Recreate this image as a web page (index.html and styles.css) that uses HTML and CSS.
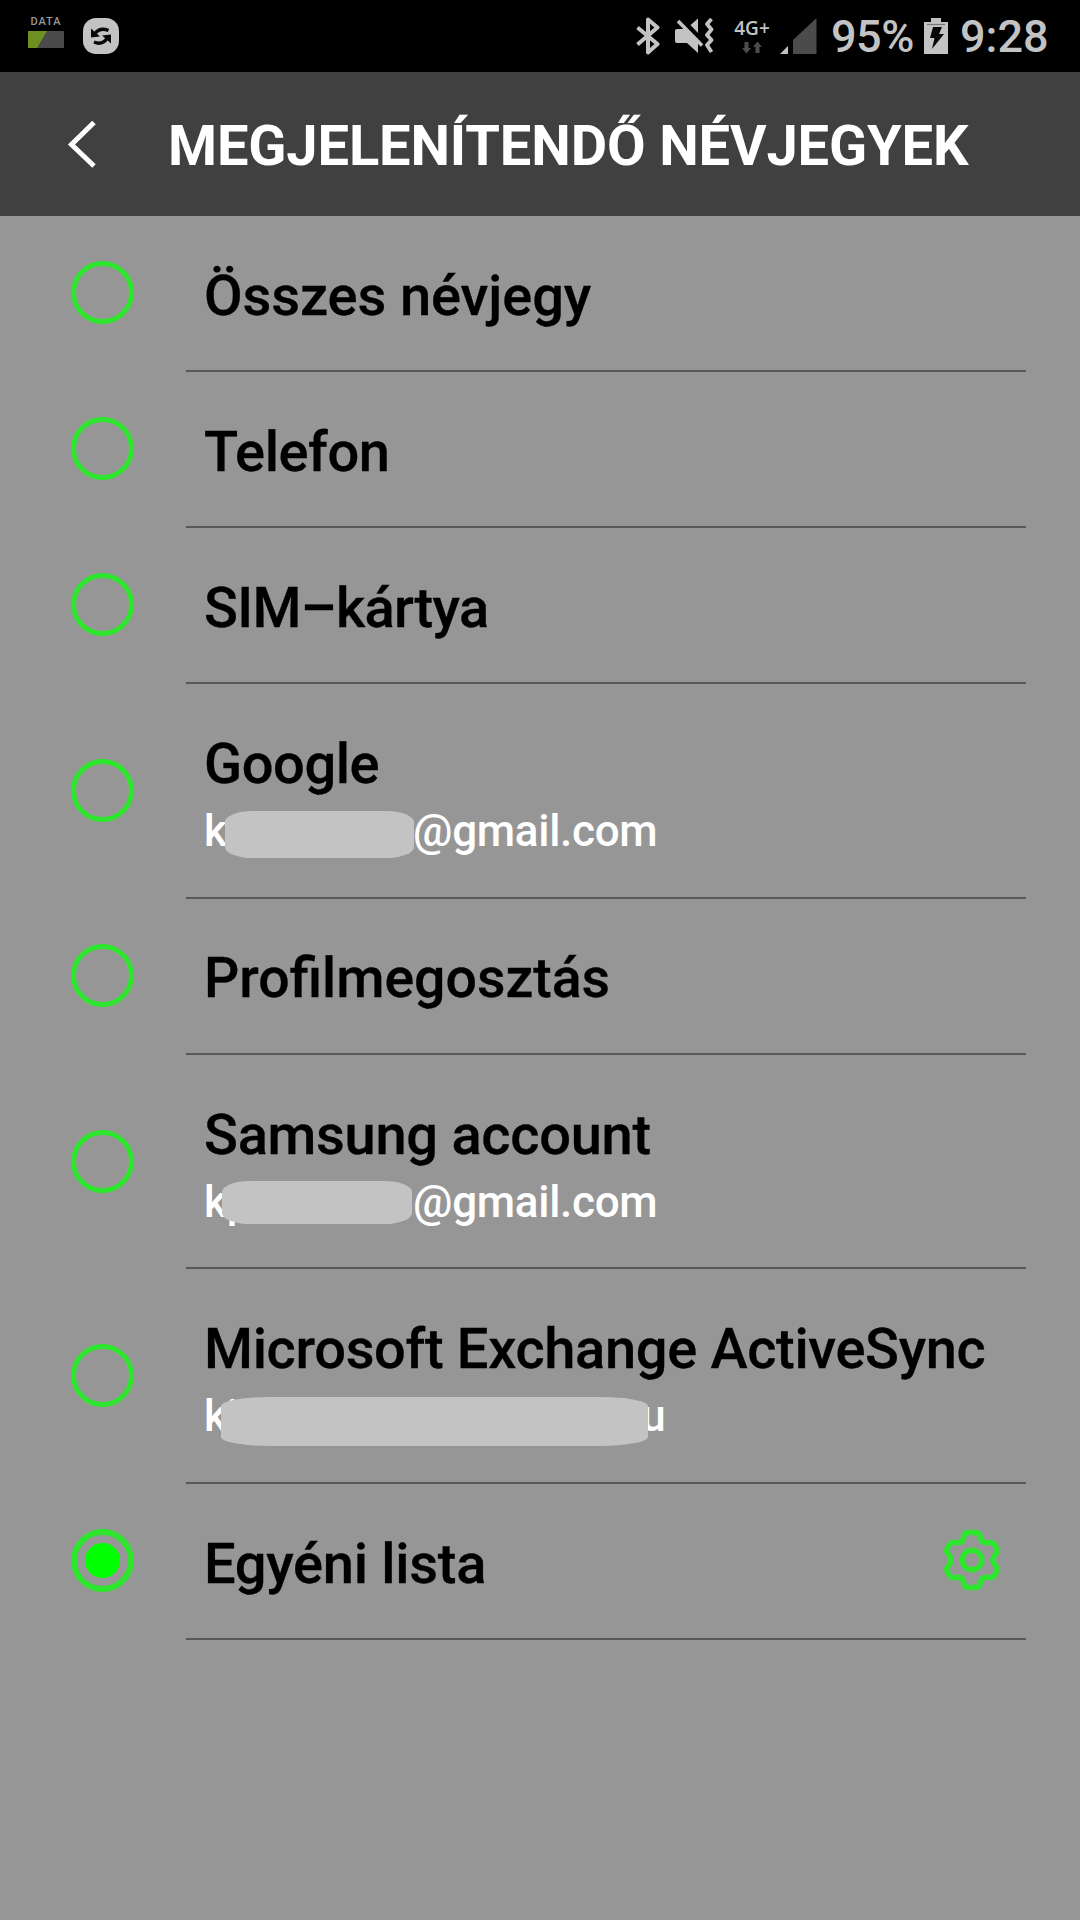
FILE: index.html
```html
<!DOCTYPE html>
<html lang="hu">
<head>
<meta charset="utf-8">
<title>Megjelenítendő névjegyek</title>
<link rel="stylesheet" href="styles.css">
</head>
<body>
<div class="status">
  <div class="status-left">
    <div class="data">
      <span class="data-label">DATA</span>
      <svg width="36" height="17" viewBox="0 0 36 17"><path d="M0 0H36V17H0Z" fill="#4b4b4b"/><path d="M0 0H19L9 17H0Z" fill="#6e9020"/></svg>
    </div>
    <svg class="sync" width="36" height="36" viewBox="0 0 36 36"><rect width="36" height="36" rx="13" fill="#c3c3c3"/><path d="M12 15.500Q17 9 25.500 12.500M24 20.500Q19 27.500 11 24" fill="none" stroke="#080808" stroke-width="3.400"/><path d="M8 10.500V19.500L17 18.500ZM28 25.500V16.500L19 17.500Z" fill="#080808"/></svg>
  </div>
  <div class="status-right">
    <svg class="bt" width="24" height="38" viewBox="0 0 24 38"><path d="M1.500 10.500L21.500 27L12 35.500V2.500L21.500 10.500L1.500 27.500" fill="none" stroke="#c3c3c3" stroke-width="4" stroke-linejoin="round"/></svg>
    <svg class="mute" width="39" height="37" viewBox="0 0 39 37"><path d="M0 13Q0 11 2 11H11L23 22V35L12 25H2Q0 25 0 23ZM15.500 7L23 .5V15Z" fill="#c3c3c3"/><path d="M3 3L27 27.500" stroke="#c3c3c3" stroke-width="3.600"/><path d="M36.500 1L32 6L36.500 11.500L32 17L36.500 22L32 27L36.500 34" fill="none" stroke="#c3c3c3" stroke-width="3.800" stroke-linejoin="round"/></svg>
    <div class="net">
      <span class="net-label">4G+</span>
      <svg width="20" height="13" viewBox="0 0 20 13"><path d="M2.500 1H6.500V7H9L4.500 12.500L0 7H2.500ZM13.500 12V6H11L15.500 .5L20 6H17.500V12Z" fill="#4c4c4c"/></svg>
    </div>
    <svg class="signal" width="37" height="36" viewBox="0 0 37 36"><path d="M0 36L8 28V36Z" fill="#c3c3c3"/><path d="M13 36V22L36.500 0V36Z" fill="#4b4b4b"/></svg>
    <span class="percent">95%</span>
    <svg class="battery" width="24" height="36" viewBox="0 0 24 36"><path d="M7 0H17V4H24V36H0V4H7Z" fill="#c3c3c3"/><path d="M3 6.500H21" stroke="#777" stroke-width="1.200"/><path d="M9 9H18L15 16H20L8 31L10.500 20H6Z" fill="#080808"/></svg>
    <span class="clock">9:28</span>
  </div>
</div>
<header class="header">
  <svg class="back" width="30" height="50" viewBox="0 0 30 50"><path d="M27 3.500L4.500 25.500L27 47" fill="none" stroke="#fff" stroke-width="5"/></svg>
  <h1 class="title">MEGJELENÍTENDŐ NÉVJEGYEK</h1>
</header>
<main class="list">
  <div class="row"><span class="radio"></span><div class="body"><div class="name n1">Összes névjegy</div></div></div>
  <div class="row"><span class="radio"></span><div class="body"><div class="name n2">Telefon</div></div></div>
  <div class="row"><span class="radio"></span><div class="body"><div class="name n3">SIM–kártya</div></div></div>
  <div class="row tall"><span class="radio"></span><div class="body"><div class="name n2">Google</div><div class="mail"><span class="start">k</span><span>@gmail.com</span><i class="mask mask-google"></i></div></div></div>
  <div class="row"><span class="radio"></span><div class="body"><div class="name n5">Profilmegosztás</div></div></div>
  <div class="row tall"><span class="radio"></span><div class="body"><div class="name">Samsung account</div><div class="mail"><span class="start">kp</span><span>@gmail.com</span><i class="mask mask-samsung"></i></div></div></div>
  <div class="row tall"><span class="radio"></span><div class="body"><div class="name n7">Microsoft Exchange ActiveSync</div><div class="mail"><span class="start long">ki</span><span>hu</span><i class="mask mask-exchange"></i></div></div></div>
  <div class="row"><span class="radio on"></span><div class="body custom"><div class="name">Egyéni lista</div>
    <svg class="gear" width="60" height="64" viewBox="-30 -32 60 64"><g fill="none" stroke="#2ee62e" stroke-width="5.500" stroke-linejoin="round"><circle r="9.800"/><path d="M-4.500 -27.500H4.500Q7 -27.500 8 -24L9 -20.500Q10 -17.500 13 -17.500H19Q21 -17.500 22 -16L25 -11Q26 -9 24.500 -7L22 -3.500Q20 0 22 3.500L24.500 7Q26 9 25 11L22 16Q21 17.500 19 17.500H13Q10 17.500 9 20.500L8 24Q7 27.500 4.500 27.500H-4.500Q-7 27.500 -8 24L-9 20.500Q-10 17.500 -13 17.500H-19Q-21 17.500 -22 16L-25 11Q-26 9 -24.500 7L-22 3.500Q-20 0 -22 -3.500L-24.500 -7Q-26 -9 -25 -11L-22 -16Q-21 -17.500 -19 -17.500H-13Q-10 -17.500 -9 -20.500L-8 -24Q-7 -27.500 -4.500 -27.500Z"/></g></svg>
  </div></div>
</main>
</body>
</html>
```
FILE: styles.css
```css
* { box-sizing: border-box; }
body { margin: 0; width: 1080px; height: 1920px; overflow: hidden; background: #969696; font-family: Roboto, sans-serif; }
svg { display: block; flex: none; }
.status { height: 72px; background: #000; color: #c3c3c3; display: flex; justify-content: space-between; padding: 0 32px 0 28px; }
.status-left, .status-right { display: flex; align-items: flex-start; }
.data { width: 36px; padding-top: 16px; display: flex; flex-direction: column; align-items: center; }
.data-label { height: 15px; font-size: 11px; line-height: 12px; font-weight: 500; letter-spacing: 1px; color: #999; }
.sync { margin: 18px 0 0 19px; }
.bt { margin: 17px 15px 0 0; }
.mute { margin: 18px 19px 0 0; }
.net { width: 38px; margin-right: 9px; padding-top: 17px; display: flex; flex-direction: column; align-items: center; }
.net-label { height: 24px; font: 600 19px/22px "Open Sans", sans-serif; }
.signal { margin: 18px 14px 0 0; }
.percent, .clock { font-size: 45px; line-height: 52px; font-weight: 500; margin-top: 11px; white-space: nowrap; }
.percent { width: 83px; margin-right: 10px; letter-spacing: -0.500px; }
.battery { margin: 18px 12px 0 0; }
.clock { width: 88px; }
.header { height: 144px; background: #404040; color: #fff; display: flex; padding-left: 67px; }
.back { margin-top: 47px; }
.title { margin: 41px 0 0 71px; font-size: 56px; line-height: 66px; font-weight: 700; white-space: nowrap; letter-spacing: -0.120px; }
.row { height: 156px; display: flex; padding: 0 54px 0 71px; }
.row.tall { height: 214.67px; }
.radio { flex: none; width: 63px; height: 63px; margin: auto 0; position: relative; top: -1.500px; left: -0.500px; border: 5.500px solid #2ee62e; border-radius: 50%; }
.tall .radio { top: -0.800px; }
.radio.on { border-width: 6px; background: radial-gradient(circle, #0f0 17px, transparent 18px); }
.body { flex: 1; margin-left: 52px; padding: 47px 0 0 18px; border-bottom: 2px solid #585858; }
.custom { display: flex; justify-content: space-between; padding-right: 24px; }
.gear { margin-top: -3px; }
.name { font-size: 56px; line-height: 66px; font-weight: 500; white-space: nowrap; color: #000; letter-spacing: -0.280px; -webkit-text-stroke: 0.3px; }
.n1 { letter-spacing: -0.100px; }
.n2 { letter-spacing: -0.430px; }
.n3 { letter-spacing: -0.670px; }
.n5 { font-size: 55.400px; letter-spacing: normal; }
.n7 { letter-spacing: -0.340px; }
.mail { position: relative; display: flex; margin-top: 8px; font-size: 44px; line-height: 52px; font-weight: 500; letter-spacing: -0.300px; color: #fff; }
.start { width: 209px; }
.start.long { width: 413px; }
.mask { position: absolute; background: #c3c3c3; border-radius: 28px / 11px; }
.mask-google { left: 21px; top: 6px; width: 189px; height: 47px; }
.mask-samsung { left: 18px; top: 5px; width: 190px; height: 43px; }
.mask-exchange { left: 17px; top: 7px; width: 427px; height: 49px; border-radius: 48px / 9px; }
```
